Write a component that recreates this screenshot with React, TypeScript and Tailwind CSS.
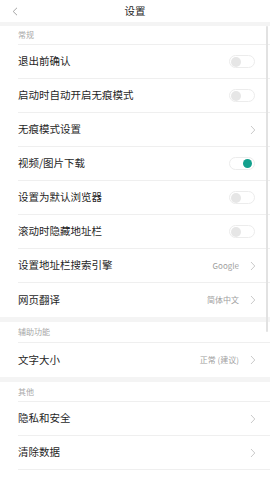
import React from "react";

type Row = {
  label: string;
  kind: "toggle" | "link";
  on?: boolean;
  value?: string;
};

const sections: { title: string; rows: Row[]; head: string; gap: string }[] = [
  {
    title: "常规",
    head: "h-[19px]",
    gap: "mt-[4px]",
    rows: [
      { label: "退出前确认", kind: "toggle" },
      { label: "启动时自动开启无痕模式", kind: "toggle" },
      { label: "无痕模式设置", kind: "link" },
      { label: "视频/图片下载", kind: "toggle", on: true },
      { label: "设置为默认浏览器", kind: "toggle" },
      { label: "滚动时隐藏地址栏", kind: "toggle" },
      { label: "设置地址栏搜索引擎", kind: "link", value: "Google" },
      { label: "网页翻译", kind: "link", value: "简体中文" },
    ],
  },
  {
    title: "辅助功能",
    head: "h-[21px]",
    gap: "mt-[5px]",
    rows: [{ label: "文字大小", kind: "link", value: "正常 (建议)" }],
  },
  {
    title: "其他",
    head: "h-[20px]",
    gap: "mt-[5px]",
    rows: [
      { label: "隐私和安全", kind: "link" },
      { label: "清除数据", kind: "link" },
      { label: "", kind: "link" },
    ],
  },
];

function Chevron() {
  return (
    <svg width="6" height="10" viewBox="0 0 6 10" fill="none">
      <path d="M1 1L4.8 5L1 9" stroke="#c4c4c4" strokeWidth="0.9" />
    </svg>
  );
}

function Toggle({ on }: { on?: boolean }) {
  return (
    <div
      className={`flex h-[13px] w-[26px] items-center rounded-full border border-[#ececec] bg-white px-[1px] ${
        on ? "justify-end" : "justify-start"
      }`}
    >
      <div
        className={`rounded-full ${
          on ? "h-[9px] w-[9px] mr-[1px] bg-[#13a08d]" : "h-[10px] w-[10px] bg-[#e6e6e6]"
        }`}
      />
    </div>
  );
}

export default function App() {
  return (
    <div
      className="relative h-[480px] w-[270px] overflow-hidden bg-[#f4f4f4]"
      style={{ fontFamily: '"Noto Sans CJK SC", "Noto Sans", sans-serif' }}
    >
      {/* Top bar */}
      <div className="relative flex h-[22px] items-center justify-center bg-white">
        <svg className="absolute left-[12px] top-[7px]" width="6" height="9" viewBox="0 0 6 9" fill="none">
          <path d="M5 0.8L1.2 4.5L5 8.2" stroke="#9a9a9a" strokeWidth="0.9" />
        </svg>
        <span className="text-[10.5px] leading-none text-[#1f1f1f]">设置</span>
      </div>

      {sections.map((s, si) => (
        <div key={s.title} className={`bg-white ${s.gap}`}>
          <div className="pl-[18px]">
            <div
              className={`flex ${s.head} items-center border-b border-[#efefef] text-[8px] leading-none text-[#a8a8a8]`}
            >
              {s.title}
            </div>
          </div>
          {s.rows.map((r, ri) => {
            const last = ri === s.rows.length - 1 && si !== 2;
            return (
              <div key={ri} className="pl-[18px]">
                <div
                  className={`flex h-[34px] items-center justify-between pr-[14px] ${
                    last ? "" : "border-b border-[#efefef]"
                  }`}
                >
                  <span className="text-[10.5px] leading-none text-[#1f1f1f]">{r.label}</span>
                  {r.label &&
                    (r.kind === "toggle" ? (
                      <div className="mr-[1px]">
                        <Toggle on={r.on} />
                      </div>
                    ) : (
                      <div className="flex items-center gap-[11px]">
                        {r.value && (
                          <span className="text-[8px] leading-none text-[#a0a0a0]">{r.value}</span>
                        )}
                        <Chevron />
                      </div>
                    ))}
                </div>
              </div>
            );
          })}
        </div>
      ))}

      {/* Scrollbar thumb */}
      <div className="absolute right-[2px] top-[26px] h-[306px] w-[2px] rounded-full bg-[#e2e2e2]" />
    </div>
  );
}
